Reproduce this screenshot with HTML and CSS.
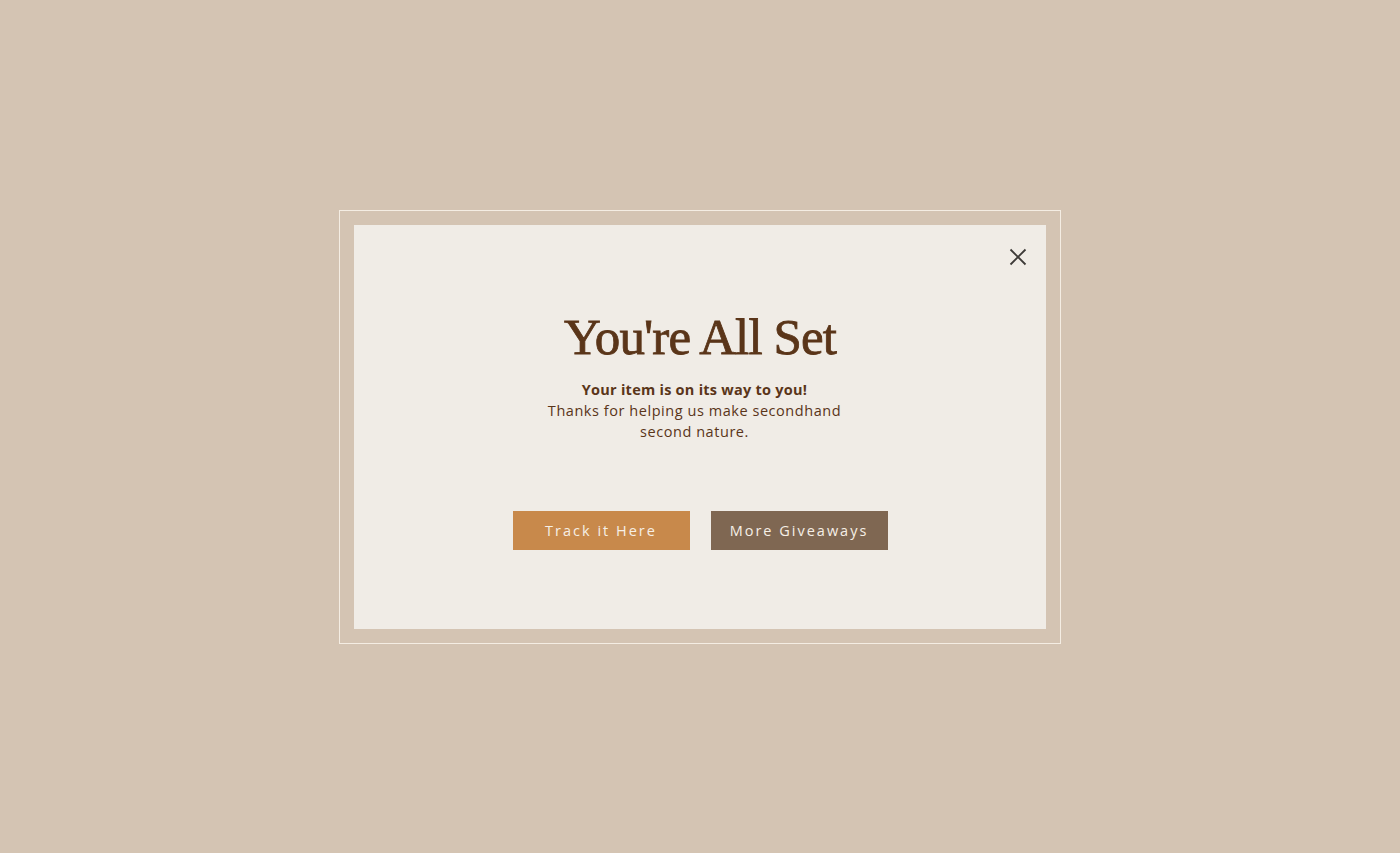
FILE: index.html
```html
<!DOCTYPE html>
<html>
<head>
<meta charset="utf-8">
<link rel="stylesheet" href="styles.css">
</head>
<body>
<div class="stage">
  <div class="frame">
    <div class="panel">
      <button class="close" aria-label="Close">
        <svg width="18" height="18" viewBox="0 0 18 18"><path d="M1.5 1.5 L16.5 16.5 M16.5 1.5 L1.5 16.5" stroke="#3d3a37" stroke-width="1.8" fill="none"/></svg>
      </button>
      <div class="content">
        <h1 class="title">You're All Set</h1>
        <p class="lead">Your item is on its way to you!</p>
        <p class="sub">Thanks for helping us make secondhand<br>second nature.</p>
        <div class="actions">
          <a class="btn btn-track">Track it Here</a>
          <a class="btn btn-more">More Giveaways</a>
        </div>
      </div>
    </div>
  </div>
</div>
</body>
</html>
```
FILE: styles.css
```css
html, body {
  margin: 0;
  padding: 0;
  height: 100%;
}
body {
  background: #d4c4b3;
  font-family: "Open Sans", "DejaVu Sans", sans-serif;
}
.stage {
  height: 853px;
  display: flex;
  align-items: center;
  justify-content: center;
}
.frame {
  width: 692px;
  height: 404px;
  border: 1px solid #f4ede3;
  padding: 14px;
  box-sizing: content-box;
  display: flex;
}
.panel {
  position: relative;
  flex: 1;
  background: #f0ece6;
  display: flex;
  justify-content: center;
}
.close {
  position: absolute;
  top: 23px;
  right: 19px;
  width: 18px;
  height: 18px;
  padding: 0;
  border: 0;
  background: none;
  cursor: pointer;
  display: flex;
}
.content {
  display: flex;
  flex-direction: column;
  align-items: center;
  padding-top: 84px;
}
.title {
  margin: 0;
  font-family: "Liberation Serif", "DejaVu Serif", serif;
  font-weight: 400;
  font-size: 51px;
  line-height: 56px;
  color: #5a3519;
  letter-spacing: -0.9px;
  -webkit-text-stroke: 0.8px #5a3519;
}
.lead {
  margin: 14px 0 0;
  margin-right: 11px;
  font-weight: 700;
  font-size: 14.5px;
  line-height: 21px;
  letter-spacing: 0.25px;
  color: #5a3519;
}
.sub {
  margin: 0;
  margin-right: 11px;
  font-size: 14.5px;
  line-height: 21.5px;
  letter-spacing: 0.55px;
  color: #5a3519;
  text-align: center;
}
.actions {
  display: flex;
  gap: 21px;
  margin-top: 68px;
}
.btn {
  width: 177px;
  height: 39px;
  display: flex;
  align-items: center;
  justify-content: center;
  color: #f6efe6;
  font-size: 14.5px;
  letter-spacing: 2px;
  text-decoration: none;
}
.btn-track { background: #c8894b; }
.btn-more { background: #7f6752; }
```
